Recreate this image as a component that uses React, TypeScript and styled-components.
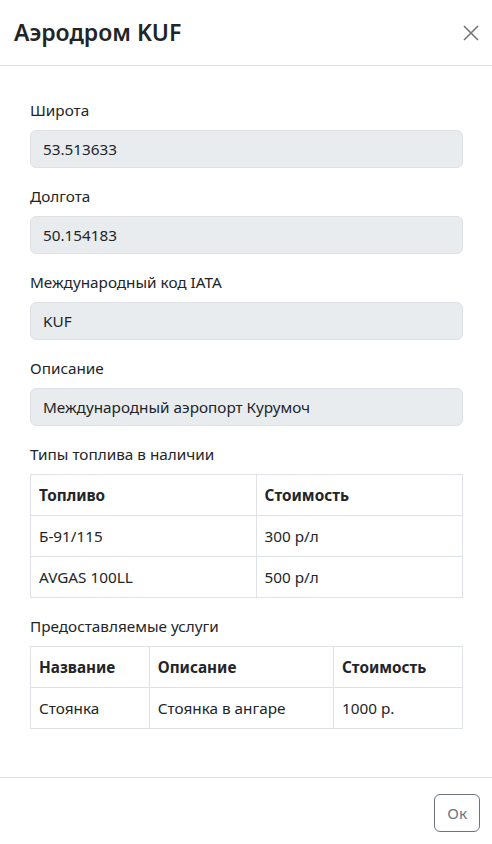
import React from 'react'
import styled, { createGlobalStyle } from 'styled-components'

interface IField {
  label: string
  value: string
}

const fields: IField[] = [
  { label: 'Широта', value: '53.513633' },
  { label: 'Долгота', value: '50.154183' },
  { label: 'Международный код IATA', value: 'KUF' },
  { label: 'Описание', value: 'Международный аэропорт Курумоч' },
]

const fuels = [
  ['Б-91/115', '300 р/л'],
  ['AVGAS 100LL', '500 р/л'],
]

const services = [['Стоянка', 'Стоянка в ангаре', '1000 р.']]

const GlobalStyle = createGlobalStyle`
body {
  margin: 0;
  background: #fff;
  color: #212529;
  font-family: "Noto Sans", "Open Sans", sans-serif;
  font-size: 15.3px;
  line-height: 24px;
}
* { box-sizing: border-box; }
`

const App: React.FC = () => {
  return (
    <>
      <GlobalStyle />
      <Modal>
        <Header>
          <Title>Аэродром KUF</Title>
          <CloseButton aria-label="Закрыть">
            <svg width="16" height="16" viewBox="0 0 16 16">
              <path d="M1 1 L15 15 M15 1 L1 15" stroke="#555" strokeWidth="1.6" fill="none" />
            </svg>
          </CloseButton>
        </Header>
        <Body>
          {fields.map((f) => (
            <Group key={f.label}>
              <Label>{f.label}</Label>
              <Input>{f.value}</Input>
            </Group>
          ))}
          <Label>Типы топлива в наличии</Label>
          <Table>
            <thead>
              <tr>
                <Th>Топливо</Th>
                <Th>Стоимость</Th>
              </tr>
            </thead>
            <tbody>
              {fuels.map((row) => (
                <tr key={row[0]}>
                  {row.map((c) => (
                    <Td key={c}>{c}</Td>
                  ))}
                </tr>
              ))}
            </tbody>
          </Table>
          <Label>Предоставляемые услуги</Label>
          <Table $last>
            <thead>
              <tr>
                <Th>Название</Th>
                <Th>Описание</Th>
                <Th>Стоимость</Th>
              </tr>
            </thead>
            <tbody>
              {services.map((row) => (
                <tr key={row[0]}>
                  {row.map((c) => (
                    <Td key={c}>{c}</Td>
                  ))}
                </tr>
              ))}
            </tbody>
          </Table>
        </Body>
        <Footer>
          <OkButton>Ок</OkButton>
        </Footer>
      </Modal>
    </>
  )
}

export default App

const Modal = styled.div`
display: flex;
flex-direction: column;
width: 492px;
background: #fff;
`
const Header = styled.div`
display: flex;
align-items: center;
justify-content: space-between;
padding: 16px 9px 16px 14px;
border-bottom: 1px solid #dee2e6;
`
const Title = styled.h5`
margin: 0;
font-size: 23px;
line-height: 33px;
font-weight: 600;
color: #212529;
`
const CloseButton = styled.button`
display: flex;
align-items: center;
justify-content: center;
width: 24px;
height: 24px;
padding: 0;
border: 0;
background: transparent;
opacity: 0.8;
`
const Body = styled.div`
padding: 32px 29px 48px 30px;
`
const Group = styled.div`
margin-bottom: 16px;
`
const Label = styled.label`
display: block;
margin-bottom: 8px;
`
const Input = styled.div`
height: 38px;
padding: 6px 12px;
background: #e9ecef;
border: 1px solid #dee2e6;
border-radius: 6px;
`
const Table = styled.table<{ $last?: boolean }>`
width: 100%;
border-collapse: collapse;
margin-bottom: ${({ $last }) => ($last ? '0' : '16px')};
`
const Th = styled.th`
text-align: left;
font-weight: 700;
padding: 8px;
border: 1px solid #dee2e6;
`
const Td = styled.td`
padding: 8px;
border: 1px solid #dee2e6;
`
const Footer = styled.div`
display: flex;
justify-content: flex-end;
padding: 12px 8px;
border-top: 1px solid #dee2e6;
`
const OkButton = styled.button`
margin: 4px;
padding: 6px 12px;
font-family: inherit;
font-size: 15.3px;
line-height: 24px;
color: #6c757d;
background: transparent;
border: 1px solid #6c757d;
border-radius: 6px;
`
